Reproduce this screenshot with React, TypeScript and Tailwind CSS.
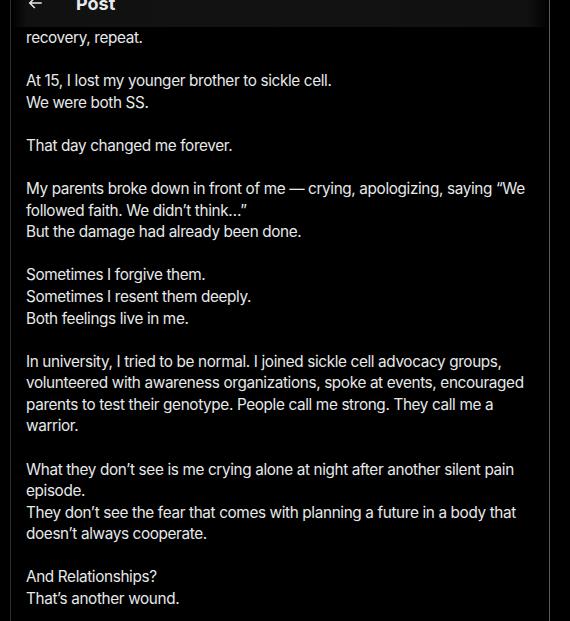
import React from "react";

const paragraphs: string[][] = [
  ["recovery, repeat."],
  ["At 15, I lost my younger brother to sickle cell.", "We were both SS."],
  ["That day changed me forever."],
  [
    "My parents broke down in front of me — crying, apologizing, saying “We",
    "followed faith. We didn’t think…”",
    "But the damage had already been done.",
  ],
  ["Sometimes I forgive them.", "Sometimes I resent them deeply.", "Both feelings live in me."],
  [
    "In university, I tried to be normal. I joined sickle cell advocacy groups,",
    "volunteered with awareness organizations, spoke at events, encouraged",
    "parents to test their genotype. People call me strong. They call me a",
    "warrior.",
  ],
  [
    "What they don’t see is me crying alone at night after another silent pain",
    "episode.",
    "They don’t see the fear that comes with planning a future in a body that",
    "doesn’t always cooperate.",
  ],
  ["And Relationships?", "That’s another wound."],
];

export default function App() {
  return (
    <div className="relative w-[570px] h-[621px] overflow-hidden bg-black">
      <div className="relative ml-[10px] w-[540px] h-[621px] border-l border-l-[#2a2d2f] border-r border-r-[#5a5a5a]">
        <div
          className="pt-[27px] pl-[15px] pr-[10px] text-[#e7e9ea] text-[15.3px] leading-[21.58px] tracking-[-0.36px]"
          style={{ fontFamily: "Inter, 'Noto Sans', sans-serif" }}
        >
          {paragraphs.map((p, i) => (
            <div key={i} className="mb-[21.58px]">
              {p.map((line, j) => (
                <div key={j} className="whitespace-nowrap">
                  {line}
                </div>
              ))}
            </div>
          ))}
        </div>
        <div className="absolute left-0 top-[-21px] w-[538px] h-[48px] flex items-center bg-[linear-gradient(to_right,#000,#111_3%,#121212_50%,#111_96%,#000)]">
          <div className="w-[18px] h-[18px] ml-[15px] text-[#e7e9ea]">
            <svg viewBox="0 0 24 24" width="18" height="18" fill="currentColor">
              <path d="M7.414 13l5.043 5.04-1.414 1.42L3.586 12l7.457-7.46 1.414 1.42L7.414 11H21v2H7.414z" />
            </svg>
          </div>
          <div
            className="ml-[32px] text-[18px] font-bold text-[#e7e9ea]"
            style={{ fontFamily: "Inter, 'Noto Sans', sans-serif" }}
          >
            Post
          </div>
        </div>
      </div>
    </div>
  );
}
